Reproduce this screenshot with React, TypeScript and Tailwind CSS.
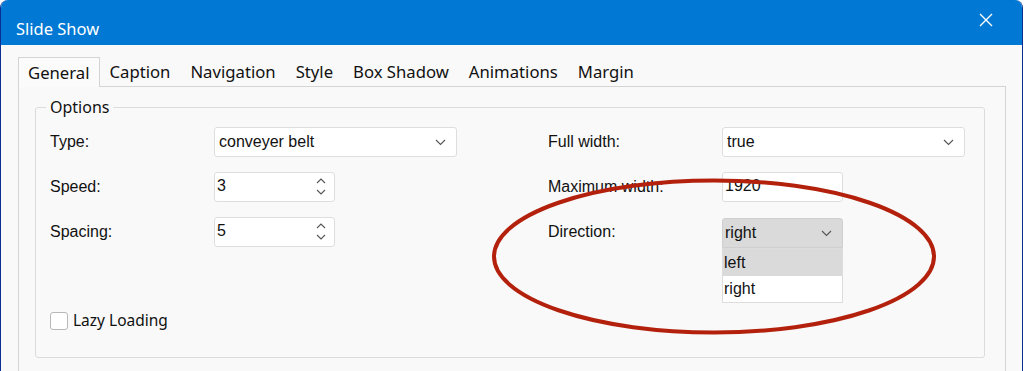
import React from 'react';

const uiFont = { fontFamily: '"Noto Sans", "Open Sans", sans-serif' };
const formFont = { fontFamily: '"Liberation Sans", Arial, sans-serif' };

const Chevron: React.FC = () => (
  <svg width="11" height="7" viewBox="0 0 11 7" className="shrink-0">
    <path d="M1 1l4.5 4.5L10 1" fill="none" stroke="#555" strokeWidth="1.1" />
  </svg>
);

const SpinArrows: React.FC = () => (
  <div className="flex flex-col items-center gap-[5px] pt-[5px]">
    <svg width="10" height="6" viewBox="0 0 10 6">
      <path d="M1 5l4-4 4 4" fill="none" stroke="#555" strokeWidth="1.1" />
    </svg>
    <svg width="10" height="6" viewBox="0 0 10 6">
      <path d="M1 1l4 4 4-4" fill="none" stroke="#555" strokeWidth="1.1" />
    </svg>
  </div>
);

const Select: React.FC<{ value: string; wide?: boolean }> = ({ value, wide }) => (
  <div
    className={
      wide
        ? 'flex items-center justify-between h-[30px] w-[243px] pl-[4px] pr-[10px] rounded-[3px] border border-[#dedede] bg-white'
        : 'flex items-center justify-between h-[30px] w-[121px] pl-[2px] pr-[10px] rounded-t-[3px] border border-[#cfcfcf] bg-[#dadada]'
    }
  >
    <span className="text-[16px] text-[#111]">{value}</span>
    <Chevron />
  </div>
);

const Spin: React.FC<{ value: string; arrows?: boolean }> = ({ value, arrows = true }) => (
  <div className="flex justify-between h-[30px] w-[121px] pl-[2px] pr-[8px] rounded-[3px] border border-[#dedede] bg-white">
    <span className="text-[16px] leading-[18px] pt-[4px] text-[#111]">{value}</span>
    {arrows && <SpinArrows />}
  </div>
);

const Row: React.FC<{ label: string; labelW: string; children: React.ReactNode }> = ({ label, labelW, children }) => (
  <div className="flex items-start h-[30px]">
    <div className={`${labelW} h-[30px] flex items-center text-[16px] text-[#111]`}>{label}</div>
    {children}
  </div>
);

const tabs = ['General', 'Caption', 'Navigation', 'Style', 'Box Shadow', 'Animations', 'Margin'];

export default function App() {
  return (
    <div className="relative w-[1024px] h-[371px] overflow-hidden bg-white">
      <div className="flex flex-col w-[1023px] h-[400px] rounded-t-[8px] border-x border-[#0c2f94] bg-[#f9f9f9] overflow-hidden">
        {/* title bar */}
        <div className="flex items-center justify-between h-[45px] shrink-0 bg-[#0078d4] pl-[15px] pr-[29px] pt-[1px]" style={uiFont}>
          <span className="text-white text-[16.5px] pt-[12px]">Slide Show</span>
          <svg width="14" height="14" viewBox="0 0 14 14" className="mt-[-6px]">
            <path d="M1 1l12 12M13 1L1 13" stroke="#fff" strokeWidth="1.4" />
          </svg>
        </div>

        {/* tabs */}
        <div className="flex items-end h-[41px] pl-[17px] shrink-0" style={uiFont}>
          {tabs.map((t, i) =>
            i === 0 ? (
              <div key={t} className="h-[30px] px-[9px] pt-[1px] flex items-center border border-b-0 border-[#d4d4d4] bg-[#fbfbfb] text-[16.7px] text-[#111] mb-[-1px] relative z-10">
                {t}
              </div>
            ) : (
              <div key={t} className="h-[30px] px-[10px] pt-[1px] flex items-center text-[16.7px] text-[#111]">
                {t}
              </div>
            )
          )}
        </div>

        {/* tab panel */}
        <div className="ml-[17px] w-[988px] flex-1 border border-[#d4d4d4] bg-[#f9f9f9] pl-[16px] pr-[20px] pt-[12px]">
          <fieldset className="border border-[#dcdcdc] rounded-[3px] h-[259px] pl-[14px] pr-[14px] pt-[12px]">
            <legend className="ml-[-4px] px-[4px] text-[16px] text-[#111] leading-[16px]" style={uiFont}>
              Options
            </legend>
            <div className="flex" style={formFont}>
              <div className="flex flex-col gap-[15px] w-[498px]">
                <Row label="Type:" labelW="w-[164px]">
                  <Select value="conveyer belt" wide />
                </Row>
                <Row label="Speed:" labelW="w-[164px]">
                  <Spin value="3" />
                </Row>
                <Row label="Spacing:" labelW="w-[164px]">
                  <Spin value="5" />
                </Row>
              </div>
              <div className="flex flex-col gap-[15px]">
                <Row label="Full width:" labelW="w-[174px]">
                  <Select value="true" wide />
                </Row>
                <Row label="Maximum width:" labelW="w-[174px]">
                  <Spin value="1920" arrows={false} />
                </Row>
                <div className="flex items-start h-[30px]">
                  <div className="w-[174px] h-[30px] flex items-center text-[16px] text-[#111]">Direction:</div>
                  <div className="relative w-[121px] mt-[1px]">
                    <Select value="right" />
                    {/* open dropdown list */}
                    <div className="absolute left-0 top-[30px] w-[121px] flex flex-col border border-[#dcdcdc] bg-white text-[16px] text-[#111] z-10">
                      <div className="h-[27px] flex items-center pl-[1px] bg-[#dadada]">left</div>
                      <div className="h-[26px] flex items-center pl-[1px]">right</div>
                    </div>
                  </div>
                </div>
              </div>
            </div>

            <label className="flex items-center gap-[5px] mt-[62px]" style={uiFont}>
              <span className="w-[18px] h-[18px] rounded-[3px] border border-[#b8b8b8] bg-white" />
              <span className="text-[15.5px] text-[#111]">Lazy Loading</span>
            </label>
          </fieldset>
        </div>
      </div>

      {/* red annotation ring */}
      <svg className="absolute left-0 top-0 pointer-events-none" width="1024" height="371">
        <ellipse cx="714" cy="256.5" rx="220" ry="76" fill="none" stroke="#b3210d" strokeWidth="4" />
      </svg>
    </div>
  );
}
